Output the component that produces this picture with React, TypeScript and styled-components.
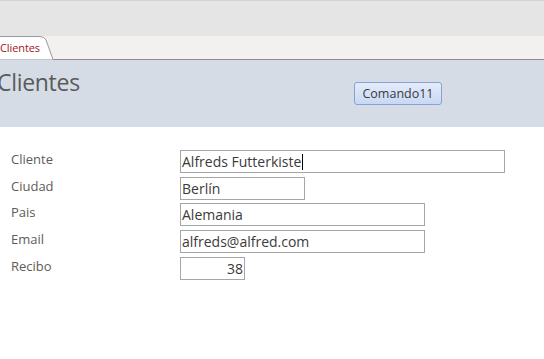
import React, { FC } from 'react';
import styled, { createGlobalStyle } from 'styled-components';

const GlobalStyle = createGlobalStyle`
  html, body {
    margin: 0;
    padding: 0;
    background: #ffffff;
    font-family: 'Open Sans', 'Segoe UI', sans-serif;
  }
`;

const Page = styled.div`
  width: 544px;
  height: 359px;
  overflow: hidden;
  background: #ffffff;
`;

const Ribbon = styled.div`
  height: 35px;
  background: #e5e5e5;
  border-top: 1px solid #d2d2d2;
`;

const TabStrip = styled.div`
  height: 23px;
  background: #f2f1ef;
  border-bottom: 1px solid #8d8d8d;
  display: flex;
  align-items: flex-end;
`;

const Tab = styled.div`
  position: relative;
  width: 54px;
  height: 24px;
  margin-bottom: -1px;
`;

const TabShape = styled.svg`
  position: absolute;
  inset: 0;
`;

const TabLabel = styled.span`
  position: relative;
  display: block;
  padding: 5px 0 0 0;
  font-size: 11px;
  line-height: 13px;
  color: #a4161a;
  letter-spacing: -0.1px;
`;

const Header = styled.div`
  height: 67px;
  background: #d6dce5;
  display: flex;
  align-items: flex-start;
`;

const Title = styled.h1`
  margin: 7px 0 0 -3px;
  width: 357px;
  font-size: 23px;
  line-height: 30px;
  font-weight: 400;
  color: #5a5a5a;
  letter-spacing: -0.3px;
`;

const CommandButton = styled.button`
  margin-top: 22px;
  width: 88px;
  height: 23px;
  padding: 0;
  border: 1px solid #88a2d4;
  border-radius: 3px;
  background: linear-gradient(#e4ecfa, #c8d8f4);
  font-family: inherit;
  font-size: 12.5px;
  color: #3a3a3a;
`;

const Form = styled.div`
  padding: 23px 0 0 11px;
  display: grid;
  grid-template-columns: 169px auto;
  row-gap: 3.7px;
  justify-items: start;
`;

const Label = styled.div`
  font-size: 13px;
  line-height: 19px;
  color: #605b58;
`;

const Field = styled.div<{ $width: number; $align?: string }>`
  box-sizing: border-box;
  width: ${(p) => p.$width}px;
  height: 23px;
  border: 1px solid #a6a6a6;
  padding: 0 1px;
  font-size: 14px;
  line-height: 21px;
  color: #3b3b3b;
  text-align: ${(p) => p.$align || 'left'};
  white-space: nowrap;
  overflow: hidden;
`;

const Caret = styled.span`
  display: inline-block;
  width: 1px;
  height: 16px;
  background: #000;
  vertical-align: -3px;
  margin-left: 1px;
`;

interface Row {
  label: string;
  value: string;
  width: number;
  align?: string;
  focused?: boolean;
}

const rows: Row[] = [
  { label: 'Cliente', value: 'Alfreds Futterkiste', width: 325, focused: true },
  { label: 'Ciudad', value: 'Berlín', width: 125 },
  { label: 'Pais', value: 'Alemania', width: 245 },
  { label: 'Email', value: 'alfreds@alfred.com', width: 245 },
  { label: 'Recibo', value: '38', width: 65, align: 'right' },
];

const App: FC = (): JSX.Element => {
  return (
    <Page>
      <GlobalStyle />
      <Ribbon />
      <TabStrip>
        <Tab>
          <TabShape width="54" height="24" viewBox="0 0 54 24">
            <path d="M0 0.5 H40 Q44 0.5 46 4 L53 23.5 H0 Z" fill="#ffffff" />
            <path d="M0 0.5 H40 Q44 0.5 46 4 L53 23.5 H54" fill="none" stroke="#9a9a9a" strokeWidth="1" />
          </TabShape>
          <TabLabel>Clientes</TabLabel>
        </Tab>
      </TabStrip>
      <Header>
        <Title>Clientes</Title>
        <CommandButton>Comando11</CommandButton>
      </Header>
      <Form>
        {rows.map((row) => (
          <React.Fragment key={row.label}>
            <Label>{row.label}</Label>
            <Field $width={row.width} $align={row.align}>
              {row.value}
              {row.focused && <Caret />}
            </Field>
          </React.Fragment>
        ))}
      </Form>
    </Page>
  );
};

export default App;
